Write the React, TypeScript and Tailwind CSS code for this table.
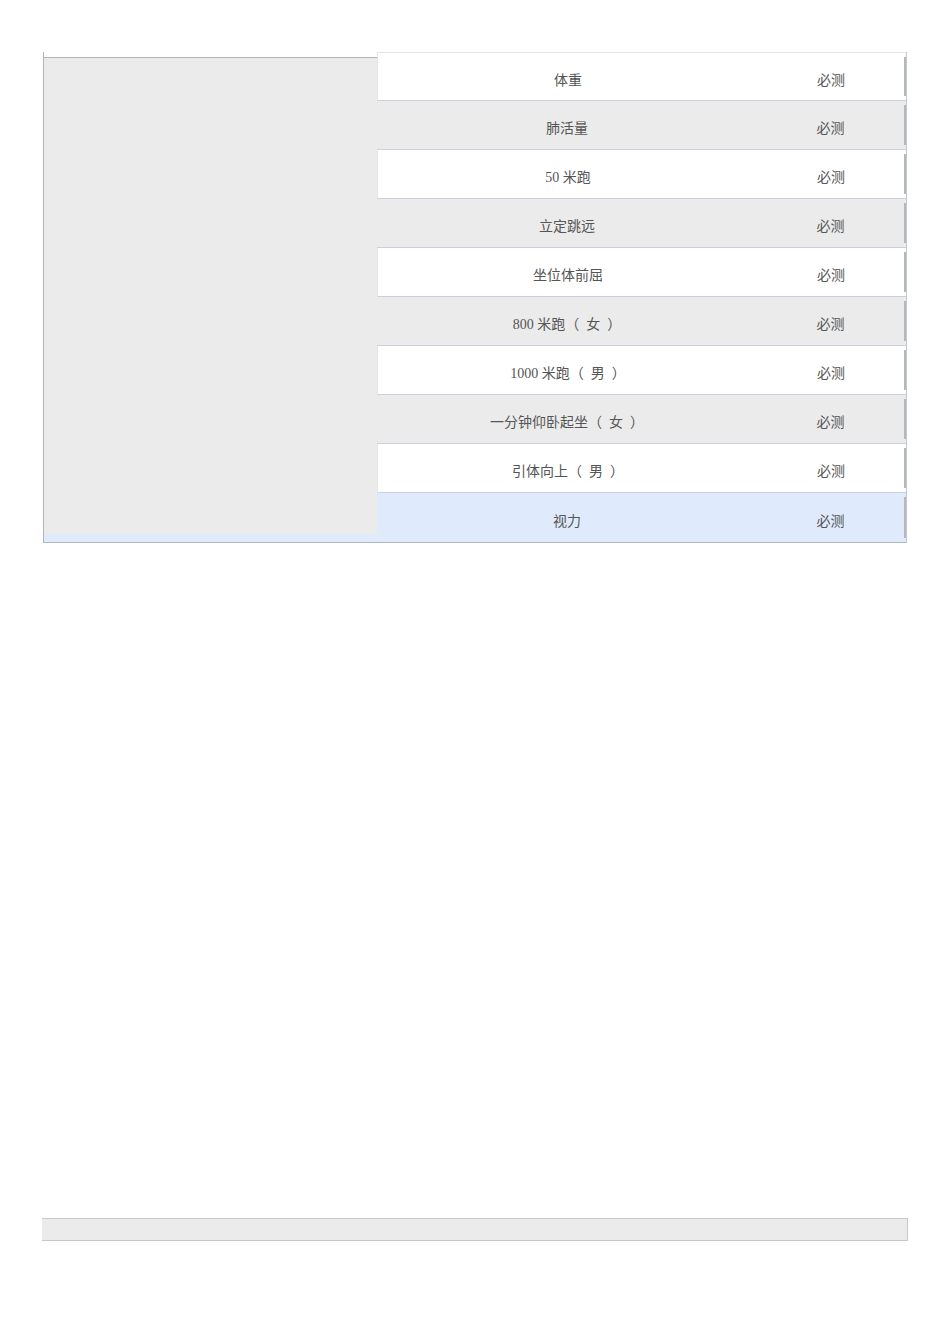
const rows: { name: string; bg: string }[] = [
  { name: "体重", bg: "bg-white border-l border-l-[#e6e6e6]" },
  { name: "肺活量", bg: "bg-[#ebebeb]" },
  { name: "50 米跑", bg: "bg-white border-l border-l-[#e6e6e6]" },
  { name: "立定跳远", bg: "bg-[#ebebeb]" },
  { name: "坐位体前屈", bg: "bg-white border-l border-l-[#e6e6e6]" },
  { name: "800 米跑（\u2002女\u2002）", bg: "bg-[#ebebeb]" },
  { name: "1000 米跑（\u2002男\u2002）", bg: "bg-white border-l border-l-[#e6e6e6]" },
  { name: "一分钟仰卧起坐（\u2002女\u2002）", bg: "bg-[#ebebeb]" },
  { name: "引体向上（\u2002男\u2002）", bg: "bg-white border-l border-l-[#e6e6e6]" },
  { name: "视力", bg: "bg-[#dfebfd]" },
];

function Row({ name, bg, first, last }: { name: string; bg: string; first: boolean; last: boolean }) {
  return (
    <div
      className={`flex h-[49px] ${bg} ${first ? "border-t border-t-[#e4e4e4]" : ""} ${
        last ? "" : "border-b border-b-[#c9d1dc]"
      }`}
    >
      <div className="w-[380px] flex items-center justify-center pt-[7px] whitespace-pre">{name}</div>
      <div className="flex-1 flex items-center justify-center pt-[7px]">必测</div>
      <div className="w-[2px] my-[4px] bg-[#b8b8b8]" />
    </div>
  );
}

export default function App() {
  return (
    <div
      className="min-h-[1344px] bg-white text-[14px] text-[#555]"
      style={{ fontFamily: '"Liberation Serif", "Noto Sans CJK SC", serif' }}
    >
      <div className="pt-[52px] pl-[43px]">
        <div className="w-[864px] flex bg-[#dfebfd] border-l border-l-[#b0b4ba] border-b border-b-[#b0b8c4] border-r border-r-[#bcc8d8]">
          <div className="w-[333px] flex flex-col">
            <div className="h-[5px] bg-white" />
            <div className="h-[477px] bg-[#ebebeb] border-t border-t-[#b4b4b4]" />
          </div>
          <div className="flex-1 flex flex-col">
            {rows.map((r, i) => (
              <Row key={i} {...r} first={i === 0} last={i === rows.length - 1} />
            ))}
          </div>
        </div>
      </div>
      <div className="mt-[675px] ml-[42px] w-[866px] h-[23px] bg-[#ebebeb] border-t border-b border-r border-[#c8c8c8]" />
    </div>
  );
}
